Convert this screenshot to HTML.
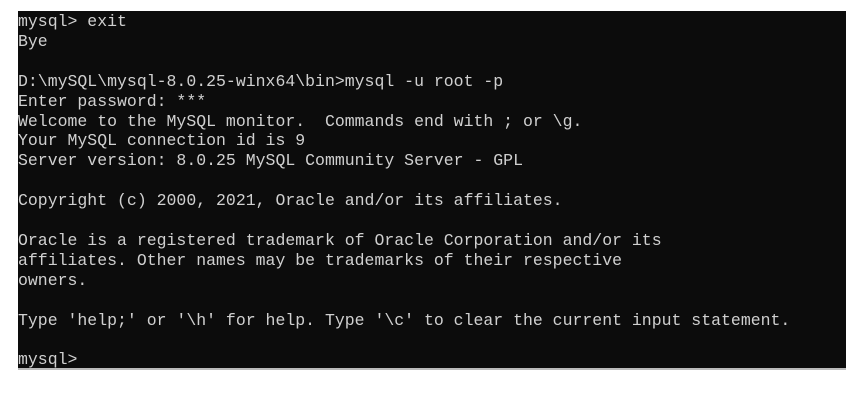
<!DOCTYPE html>
<html><head><style>
html,body{margin:0;padding:0;background:#fff;width:848px;height:404px;overflow:hidden}
.t{position:absolute;left:18px;top:11px;width:828px;height:357px;background:#0c0c0c;border-bottom:2px solid #bbb}
pre{margin:0;position:absolute;left:0;top:1px;color:#d0d0d0;font-family:"Liberation Mono",monospace;font-size:16.5px;line-height:19.9px;white-space:pre}
</style></head><body>
<div class="t"><pre>mysql&gt; exit
Bye

D:\mySQL\mysql-8.0.25-winx64\bin&gt;mysql -u root -p
Enter password: ***
Welcome to the MySQL monitor.  Commands end with ; or \g.
Your MySQL connection id is 9
Server version: 8.0.25 MySQL Community Server - GPL

Copyright (c) 2000, 2021, Oracle and/or its affiliates.

Oracle is a registered trademark of Oracle Corporation and/or its
affiliates. Other names may be trademarks of their respective
owners.

Type 'help;' or '\h' for help. Type '\c' to clear the current input statement.

mysql&gt;</pre></div>
</body></html>
